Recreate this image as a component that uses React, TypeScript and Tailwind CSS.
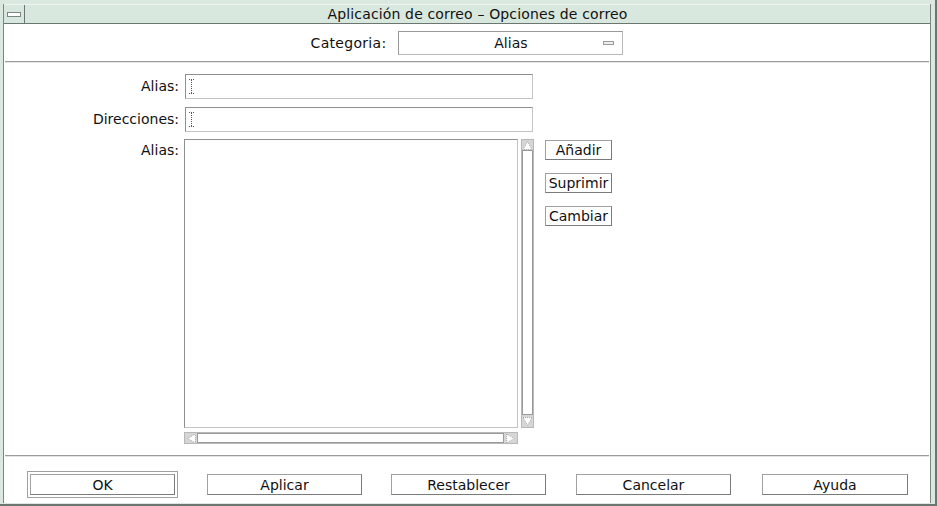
import React from "react";

const IBeam = () => (
  <svg width="5" height="15" viewBox="0 0 5 15" className="block">
    <path d="M0 0.5H5M0 14.5H5" stroke="#555" strokeWidth="1" strokeDasharray="1 1" />
    <path d="M2.5 1V14" stroke="#555" strokeWidth="1" strokeDasharray="1 1" />
  </svg>
);

const Arrow = ({ dir }: { dir: "up" | "down" | "left" | "right" }) => {
  const pts: Record<string, string> = {
    up: "5.5,1.5 10,9.5 1,9.5",
    down: "1,1.5 10,1.5 5.5,9.5",
    left: "1.5,5.5 9.5,1 9.5,10",
    right: "1.5,1 1.5,10 9.5,5.5",
  };
  return (
    <svg width="11" height="11" viewBox="0 0 11 11" className="block">
      <polygon points={pts[dir]} fill="#ffffff" stroke="#a8a8a8" strokeWidth="1" strokeDasharray="1 1" />
    </svg>
  );
};

const SideButton = ({ label }: { label: string }) => (
  <div className="w-[67px] h-[20px] border border-[#a0a0a0] border-r-[#7a7a7a] border-b-[#7a7a7a] flex items-center justify-center leading-none">
    {label}
  </div>
);

const BottomButton = ({ label, w, ml }: { label: string; w: string; ml: string }) => (
  <div className={`${w} ${ml} mt-[3px] h-[21px] border border-[#a0a0a0] border-r-[#7a7a7a] border-b-[#7a7a7a] flex items-center justify-center leading-none`}>
    {label}
  </div>
);

export default function App() {
  return (
    <div className="w-[937px] h-[506px] bg-[#dbe8df] pt-[4px] pl-[3px] pr-[4px] pb-[1px] border-r-2 border-b-2 border-[#6c7670] flex text-[14px] text-[#111] font-['DejaVu_Sans',sans-serif]">
      <div className="flex-1 flex flex-col bg-white border-l border-r border-[#7d8781]">
        {/* Title bar */}
        <div className="h-[20px] flex bg-[#d9e8de] border-t border-t-[#eef5f0] border-b border-b-[#6c7670]">
          <div className="w-[21px] border-r border-[#6c7670] flex items-center justify-center">
            <div className="w-[12px] h-[3px] bg-white border border-[#7d8781] box-content" />
          </div>
          <div className="flex-1 flex items-center justify-center leading-none text-[14px] tracking-[0.15px]">
            Aplicación de correo – Opciones de correo
          </div>
        </div>

        {/* Category row */}
        <div className="h-[37px] flex items-center justify-center gap-[12px] pt-[1px]">
          <span className="tracking-[0.3px]">Categoria:</span>
          <div className="w-[225px] h-[24px] border border-[#9a9a9a] border-r-[#b8b8b8] border-b-[#b8b8b8] flex items-center relative">
            <span className="flex-1 text-center">Alias</span>
            <div className="absolute right-[8px] top-[9px] w-[11px] h-[4px] border border-[#9a9a9a] bg-[#eeeeee]" />
          </div>
        </div>
        <div className="mx-[1px] h-[2px] border-t border-[#9c9c9c] border-b border-b-[#e4e4e4]" />

        {/* Form */}
        <div className="flex-1 flex flex-col pt-[11px]">
          <div className="flex items-center">
            <div className="w-[175px] text-right">Alias:</div>
            <div className="ml-[6px] w-[348px] h-[25px] border border-[#8f8f8f] border-r-[#c4c4c4] border-b-[#c4c4c4] flex items-center pl-[3px]">
              <IBeam />
            </div>
          </div>
          <div className="flex items-center mt-[8px]">
            <div className="w-[175px] text-right">Direcciones:</div>
            <div className="ml-[6px] w-[348px] h-[25px] border border-[#8f8f8f] border-r-[#c4c4c4] border-b-[#c4c4c4] flex items-center pl-[3px]">
              <IBeam />
            </div>
          </div>
          <div className="flex items-start mt-[7px]">
            <div className="w-[175px] text-right pt-[1px]">Alias:</div>
            <div className="ml-[5px] flex flex-col">
              <div className="flex">
                <div className="w-[334px] h-[289px] border border-[#8f8f8f] border-r-[#c4c4c4] border-b-[#c4c4c4]" />
                <div className="ml-[3px] w-[13px] h-[289px] border border-[#b8b8b8] flex flex-col">
                  <div className="h-[10px] bg-[#d6d6d6] flex items-center justify-center"><Arrow dir="up" /></div>
                  <div className="flex-1 border border-[#9a9a9a] bg-white" />
                  <div className="h-[12px] bg-[#d6d6d6] flex items-center justify-center"><Arrow dir="down" /></div>
                </div>
              </div>
              <div className="mt-[4px] w-[334px] h-[12px] border border-[#b8b8b8] flex">
                <div className="w-[12px] bg-[#d6d6d6] flex items-center justify-center"><Arrow dir="left" /></div>
                <div className="flex-1 border border-[#9a9a9a] bg-white" />
                <div className="w-[13px] bg-[#d6d6d6] flex items-center justify-center"><Arrow dir="right" /></div>
              </div>
            </div>
            <div className="ml-[11px] pt-[1px] flex flex-col gap-[13px]">
              <SideButton label="Añadir" />
              <SideButton label="Suprimir" />
              <SideButton label="Cambiar" />
            </div>
          </div>
        </div>

        {/* Bottom */}
        <div className="h-[48px] flex flex-col">
          <div className="mx-[1px] h-[2px] border-t border-[#9c9c9c] border-b border-b-[#e4e4e4]" />
          <div className="flex items-start pt-[14px] pl-[23px]">
            <div className="w-[151px] h-[27px] border border-[#a0a0a0] p-[2px]">
              <div className="w-full h-full border border-[#a0a0a0] border-r-[#7a7a7a] border-b-[#7a7a7a] flex items-center justify-center leading-none">
                OK
              </div>
            </div>
            <BottomButton label="Aplicar" w="w-[155px]" ml="ml-[29px]" />
            <BottomButton label="Restablecer" w="w-[155px]" ml="ml-[29px]" />
            <BottomButton label="Cancelar" w="w-[155px]" ml="ml-[30px]" />
            <BottomButton label="Ayuda" w="w-[146px]" ml="ml-[31px]" />
          </div>
        </div>
      </div>
    </div>
  );
}
